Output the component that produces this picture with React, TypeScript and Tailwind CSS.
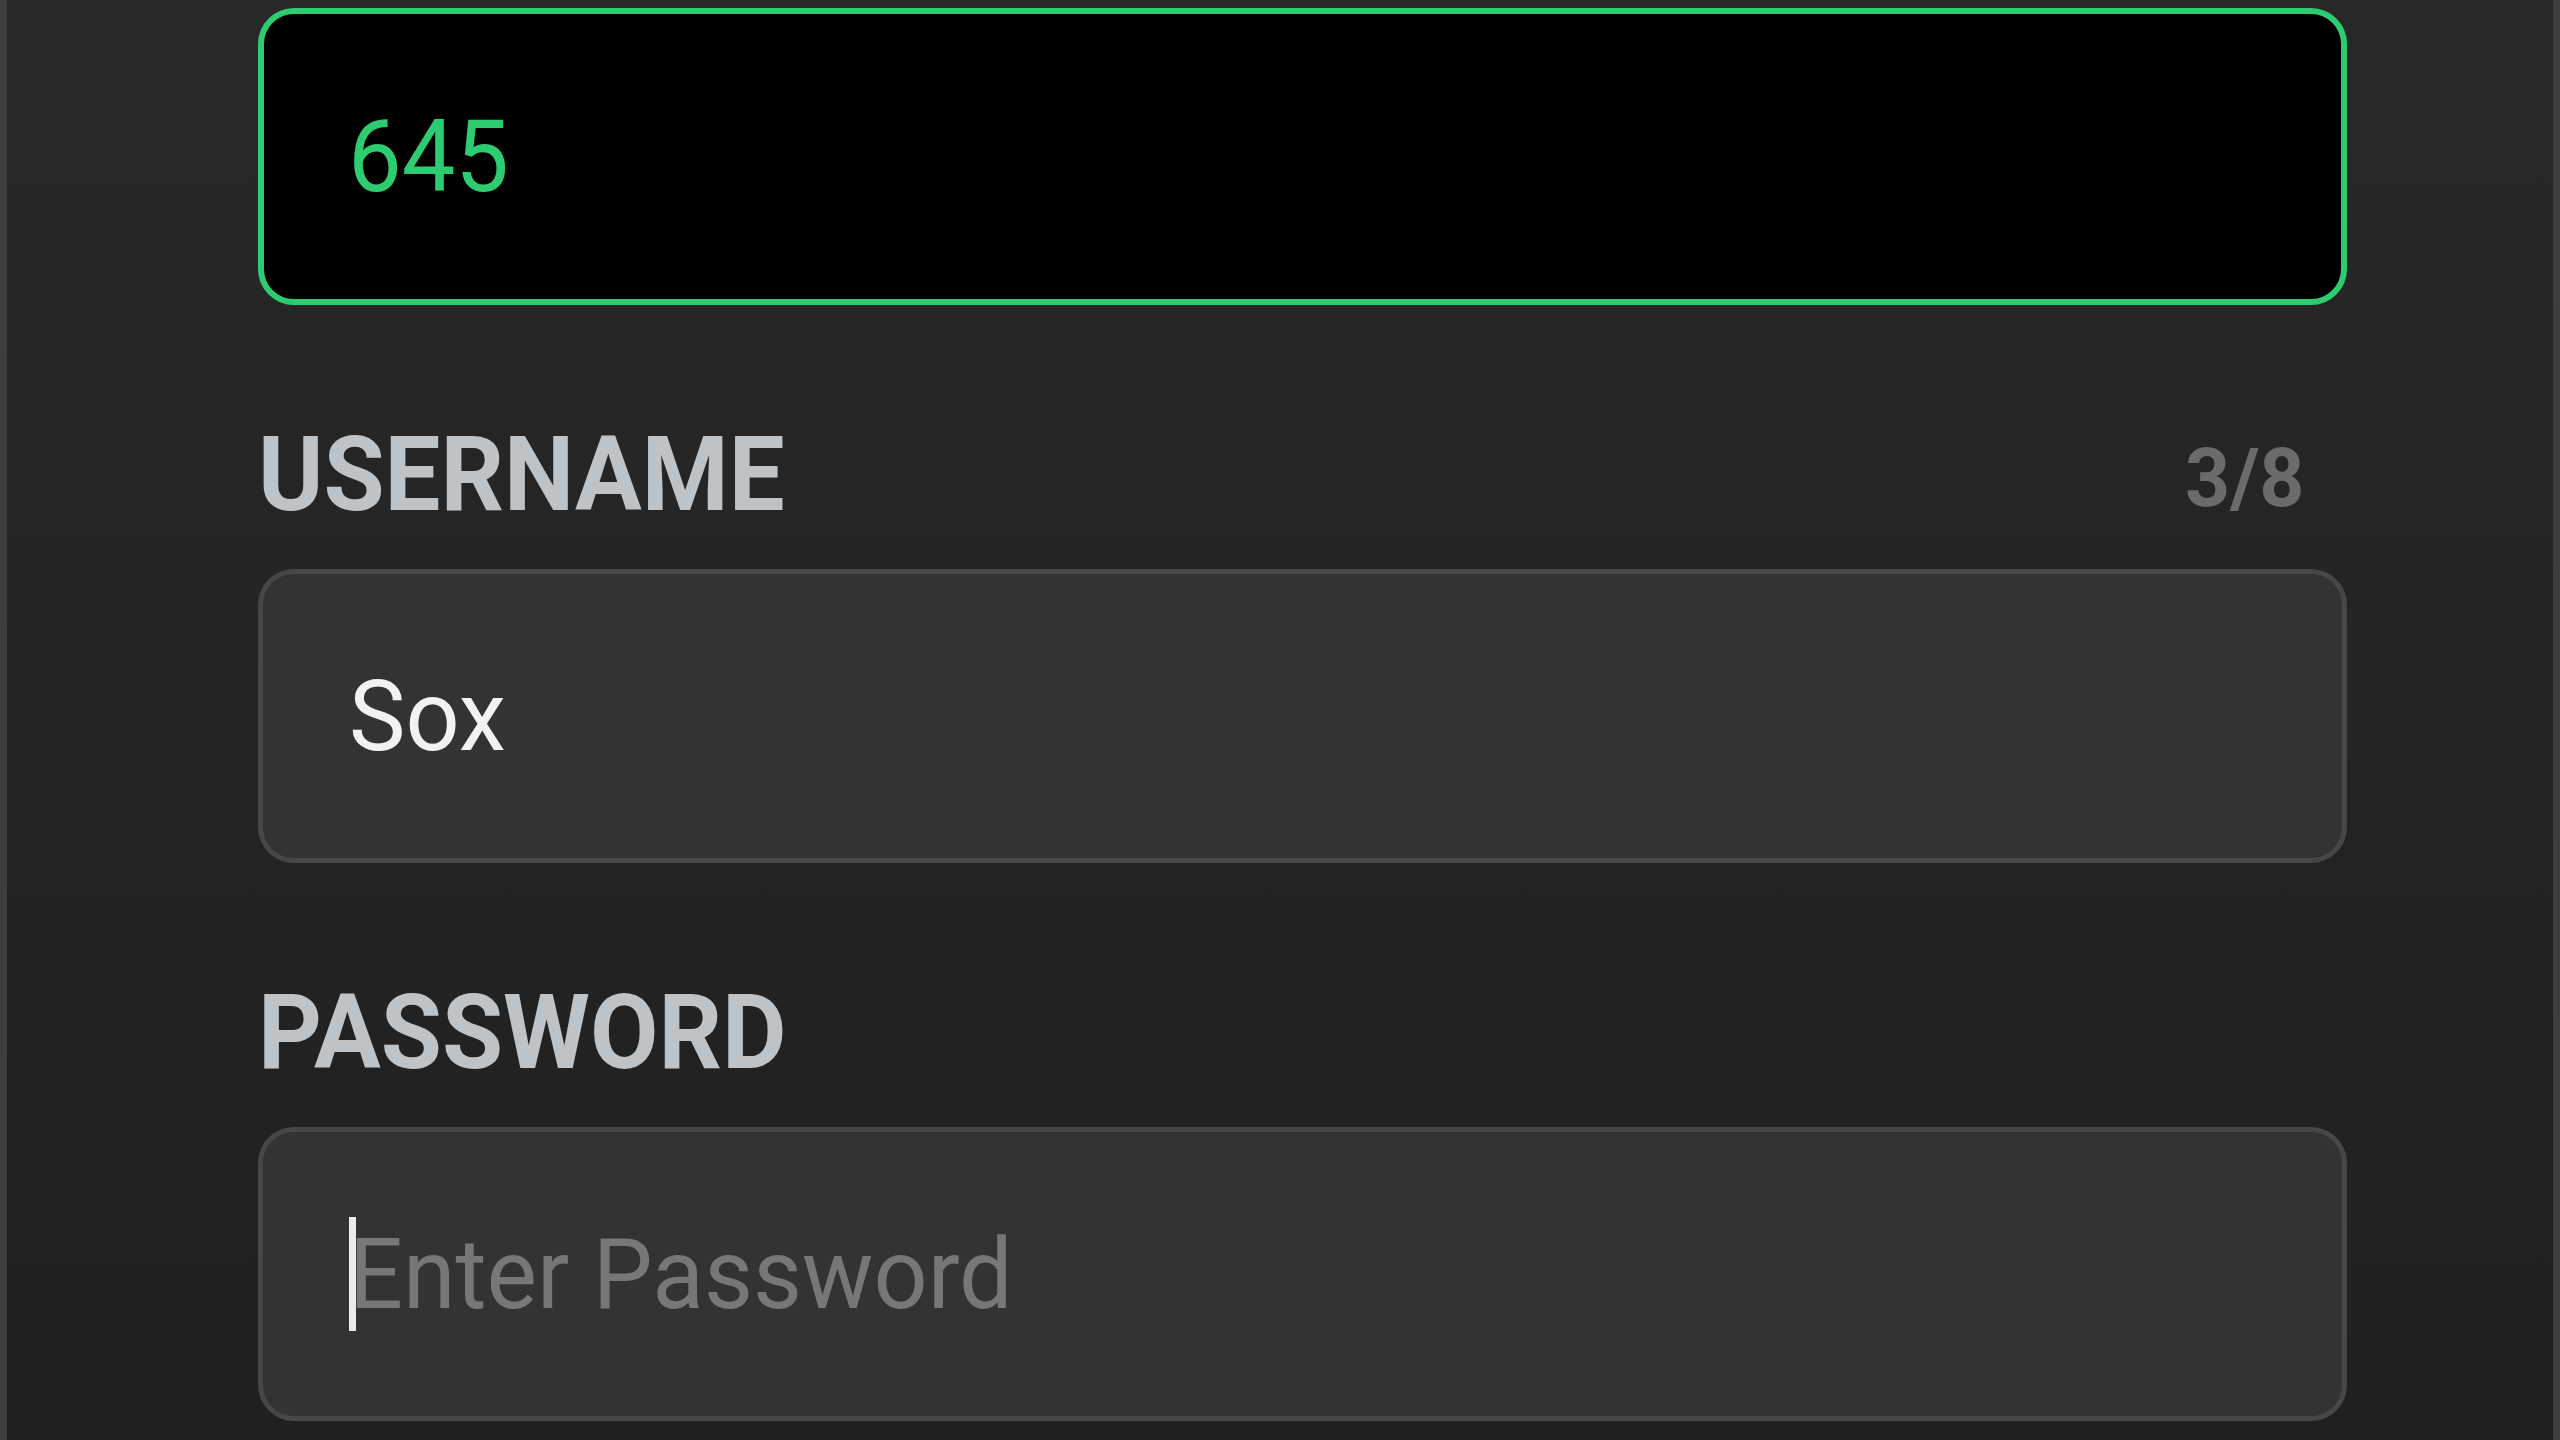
import React from 'react';

const Field = ({
  label,
  counter,
  children,
}: {
  label: string;
  counter?: string;
  children: React.ReactNode;
}) => {
  return (
    <div className="flex flex-col">
      <div className="mt-[118px] flex items-baseline justify-between pr-[42px]">
        <span className="origin-left scale-x-[0.955] text-[104px] font-bold leading-none text-[#bdc3c7]">
          {label}
        </span>
        {counter && (
          <span className="origin-right -translate-y-[4px] scale-x-[0.96] text-[82px] font-bold leading-none text-[#6b6b6b]">
            {counter}
          </span>
        )}
      </div>
      <div className="mt-[42px] flex h-[294px] items-center rounded-[36px] border-[5px] border-[#474747] bg-[#333333]">
        {children}
      </div>
    </div>
  );
};

const App = () => {
  return (
    <div className="flex h-screen w-full overflow-hidden bg-[#242424] font-[Roboto,sans-serif]">
      <div className="w-[7px] bg-[#3e3e3e]" />
      <div className="flex-1 bg-linear-to-b from-[#282828] to-[#202020] pl-[251px] pt-[8px]">
        <div className="flex w-[2089px] flex-col">
          <div className="flex h-[297px] items-center rounded-[36px] border-[6px] border-[#2ecc71] bg-black pl-[84px]">
            <span className="origin-left scale-x-[0.955] text-[100px] leading-none text-[#2ecc71]">
              645
            </span>
          </div>

          <Field label="USERNAME" counter="3/8">
            <div className="pl-[86px]">
              <span className="inline-block origin-left scale-x-[0.96] text-[99px] leading-none text-[#f2f2f2]">
                Sox
              </span>
            </div>
          </Field>

          <Field label="PASSWORD">
            <div className="relative pl-[86px]">
              <span className="inline-block origin-left scale-x-[0.96] text-[99px] leading-none text-[#777777]">
                Enter Password
              </span>
              <span className="absolute left-[86px] top-1/2 h-[114px] w-[7px] -translate-y-1/2 bg-[#e8ecec]" />
            </div>
          </Field>
        </div>
      </div>
      <div className="w-[7px] bg-[#3e3e3e]" />
    </div>
  );
};

export default App;
